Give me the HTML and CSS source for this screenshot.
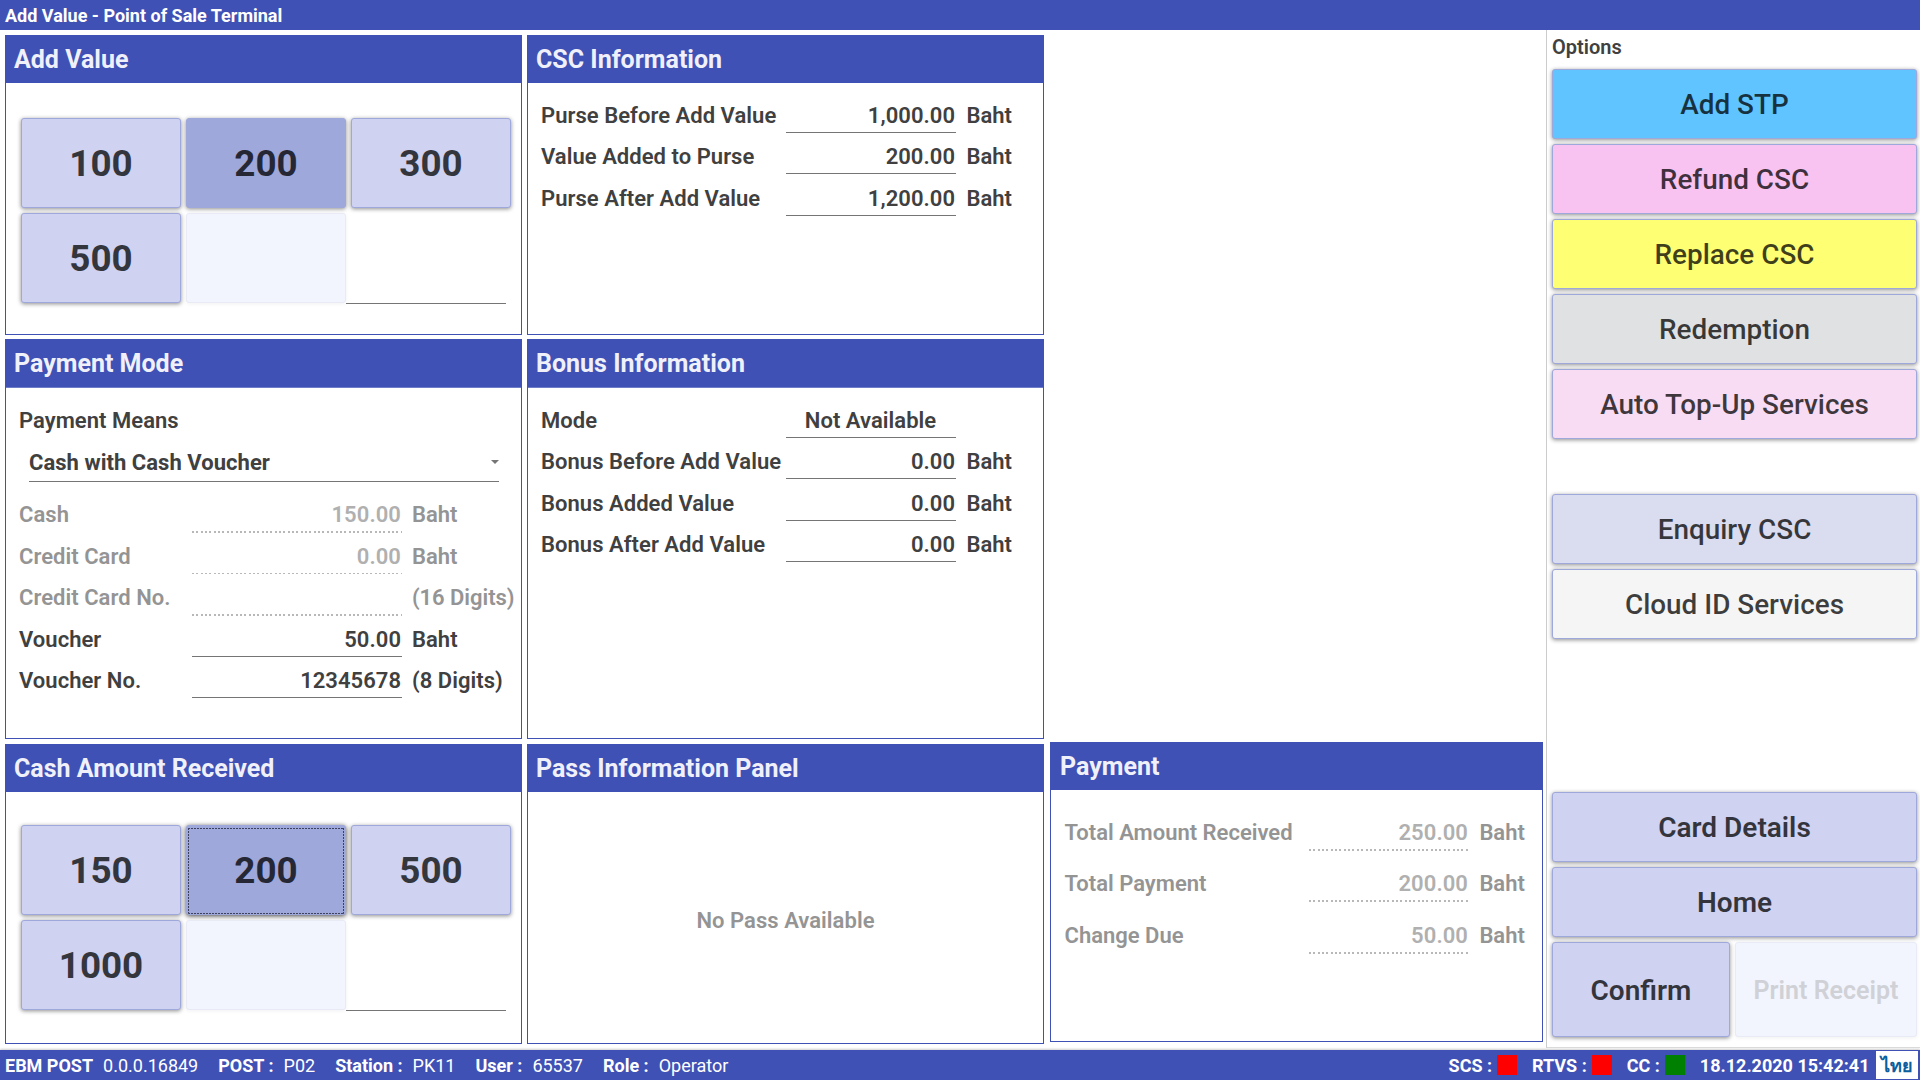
FILE: index.html
```html
<!DOCTYPE html>
<html lang="en">
<head>
<meta charset="utf-8">
<title>Add Value - Point of Sale Terminal</title>
<link rel="stylesheet" href="styles.css">
</head>
<body>
<header class="titlebar">Add Value - Point of Sale Terminal</header>

<main class="workspace">
  <div class="column">
    <section class="panel panel-top">
      <h2 class="panel-title">Add Value</h2>
      <div class="keypad">
        <button class="key">100</button>
        <button class="key selected">200</button>
        <button class="key">300</button>
        <button class="key">500</button>
        <button class="key blank" disabled></button>
        <div class="key-input"></div>
      </div>
    </section>

    <section class="panel panel-middle">
      <h2 class="panel-title">Payment Mode</h2>
      <div class="form form-mode">
        <div class="row"><span class="label">Payment Means</span></div>
        <div class="select"><span>Cash with Cash Voucher</span><svg class="caret" viewBox="0 0 8 4"><path d="M0 0h8L4 4z"/></svg></div>
        <div class="row off"><span class="label">Cash</span><span class="field">150.00</span><span class="unit">Baht</span></div>
        <div class="row off thin"><span class="label">Credit Card</span><span class="field">0.00</span><span class="unit">Baht</span></div>
        <div class="row off"><span class="label">Credit Card No.</span><span class="field"></span><span class="unit">(16 Digits)</span></div>
        <div class="row"><span class="label">Voucher</span><span class="field">50.00</span><span class="unit">Baht</span></div>
        <div class="row"><span class="label">Voucher No.</span><span class="field">12345678</span><span class="unit">(8 Digits)</span></div>
      </div>
    </section>

    <section class="panel panel-bottom">
      <h2 class="panel-title">Cash Amount Received</h2>
      <div class="keypad">
        <button class="key">150</button>
        <button class="key selected focused">200</button>
        <button class="key">500</button>
        <button class="key">1000</button>
        <button class="key blank" disabled></button>
        <div class="key-input"></div>
      </div>
    </section>
  </div>

  <div class="column">
    <section class="panel panel-top">
      <h2 class="panel-title">CSC Information</h2>
      <div class="form form-info">
        <div class="row"><span class="label">Purse Before Add Value</span><span class="field">1,000.00</span><span class="unit">Baht</span></div>
        <div class="row"><span class="label">Value Added to Purse</span><span class="field">200.00</span><span class="unit">Baht</span></div>
        <div class="row"><span class="label">Purse After Add Value</span><span class="field">1,200.00</span><span class="unit">Baht</span></div>
      </div>
    </section>

    <section class="panel panel-middle">
      <h2 class="panel-title">Bonus Information</h2>
      <div class="form form-info">
        <div class="row"><span class="label">Mode</span><span class="field centered">Not Available</span></div>
        <div class="row"><span class="label">Bonus Before Add Value</span><span class="field">0.00</span><span class="unit">Baht</span></div>
        <div class="row"><span class="label">Bonus Added Value</span><span class="field">0.00</span><span class="unit">Baht</span></div>
        <div class="row"><span class="label">Bonus After Add Value</span><span class="field">0.00</span><span class="unit">Baht</span></div>
      </div>
    </section>

    <section class="panel panel-bottom">
      <h2 class="panel-title">Pass Information Panel</h2>
      <div class="empty">No Pass Available</div>
    </section>
  </div>

  <div class="column column-payment">
    <section class="panel panel-payment">
      <h2 class="panel-title">Payment</h2>
      <div class="form form-payment">
        <div class="row off"><span class="label">Total Amount Received</span><span class="field">250.00</span><span class="unit">Baht</span></div>
        <div class="row off"><span class="label">Total Payment</span><span class="field">200.00</span><span class="unit">Baht</span></div>
        <div class="row off"><span class="label">Change Due</span><span class="field">50.00</span><span class="unit">Baht</span></div>
      </div>
    </section>
  </div>

  <aside class="options">
    <h3 class="options-title">Options</h3>
    <nav class="group">
      <button class="option add-stp">Add STP</button>
      <button class="option refund">Refund CSC</button>
      <button class="option replace">Replace CSC</button>
      <button class="option redemption">Redemption</button>
      <button class="option top-up">Auto Top-Up Services</button>
    </nav>
    <nav class="group group-lookup">
      <button class="option enquiry">Enquiry CSC</button>
      <button class="option cloud">Cloud ID Services</button>
    </nav>
    <nav class="group group-actions">
      <button class="option strong">Card Details</button>
      <button class="option strong">Home</button>
      <div class="pair">
        <button class="option strong tall">Confirm</button>
        <button class="option strong tall disabled" disabled>Print Receipt</button>
      </div>
    </nav>
  </aside>
</main>

<footer class="statusbar">
  <div class="facts">
    <span class="fact"><b>EBM POST</b> 0.0.0.16849</span>
    <span class="fact"><b>POST :</b> P02</span>
    <span class="fact"><b>Station :</b> PK11</span>
    <span class="fact"><b>User :</b> 65537</span>
    <span class="fact"><b>Role :</b> Operator</span>
  </div>
  <div class="signals">
    <span class="signal">SCS :<i class="lamp red"></i></span>
    <span class="signal">RTVS :<i class="lamp red"></i></span>
    <span class="signal">CC :<i class="lamp green"></i></span>
    <time class="clock">18.12.2020 15:42:41</time>
    <span class="lang" lang="th">ไทย</span>
  </div>
</footer>
</body>
</html>
```
FILE: styles.css
```css
:root {
  --indigo: #3f51b5;
  --indigo-light: #9fa8da;
  --key: #cfd2f1;
  --ink: #404040;
}

* { box-sizing: border-box; }

body {
  margin: 0;
  width: 1920px;
  height: 1080px;
  display: flex;
  flex-direction: column;
  overflow: hidden;
  background: #fff;
  color: var(--ink);
  font-family: Roboto, sans-serif;
}

button { font-family: inherit; padding: 0; margin: 0; }

.titlebar {
  height: 30px;
  padding: 1px 0 0 5px;
  background: var(--indigo);
  color: #fff;
  font-size: 18px;
  font-weight: 700;
  line-height: 30px;
}

.workspace {
  height: 1020px;
  display: grid;
  grid-template-columns: 522px 522px 502px 374px;
}

/* Panels */
.column {
  display: flex;
  flex-direction: column;
  padding: 5px 0 0 5px;
}

.column-payment {
  justify-content: flex-end;
  padding: 0 3px 8px 6px;
}

.panel { border: 1px solid var(--indigo); }
.panel-top { height: 300px; margin-bottom: 4px; }
.panel-middle { height: 400px; margin-bottom: 5px; }
.panel-bottom, .panel-payment { height: 300px; }

.panel-title {
  margin: 0;
  height: 47px;
  padding-left: 8px;
  background: var(--indigo);
  color: #f0f0fa;
  font-size: 25px;
  font-weight: 700;
  line-height: 48px;
}

.panel-middle .panel-title { height: 48px; border-bottom: 1px solid #6f7cc8; }
.panel-payment .panel-title { padding-left: 9px; }

/* Keypads */
.keypad {
  display: grid;
  grid-template-columns: repeat(3, 160px);
  grid-auto-rows: 90px;
  gap: 5px;
  padding: 35px 0 0 15px;
}

.panel-bottom .keypad { padding-top: 33px; }

.key {
  border: 1px solid var(--indigo-light);
  border-radius: 3px;
  background: var(--key);
  box-shadow: 0 1px 4px rgba(0, 0, 0, .45);
  color: #33363c;
  font-size: 36.8px;
  font-weight: 700;
}

.key.selected { background-color: var(--indigo-light); color: #262735; }

.key.focused {
  box-shadow: 0 1px 5px rgba(0, 0, 0, .75);
  background-image:
    repeating-linear-gradient(90deg, #3e415e 0 2px, transparent 2px 3px),
    repeating-linear-gradient(90deg, #3e415e 0 2px, transparent 2px 3px),
    repeating-linear-gradient(#3e415e 0 2px, transparent 2px 3px),
    repeating-linear-gradient(#3e415e 0 2px, transparent 2px 3px);
  background-size: 156px 1px, 156px 1px, 1px 86px, 1px 86px;
  background-position: 1px 2px, 1px 87px, 1px 2px, 156px 2px;
  background-repeat: no-repeat;
}

.key.blank { background: #f2f5fe; border-color: #e8eaf6; box-shadow: 0 1px 4px rgba(0, 0, 0, .06); }

.key-input { height: 91px; margin-left: -5px; width: 160px; border-bottom: 1px solid #757575; }

/* Forms */
.form { font-size: 22px; font-weight: 600; line-height: 33px; letter-spacing: .04px; }

.row {
  display: grid;
  grid-template-columns: var(--label) var(--field) auto;
  align-content: end;
  height: 41.4px;
  white-space: nowrap;
}

.row > * { height: 34px; }
.field { padding-right: 1px; border-bottom: 1px solid #757575; text-align: right; }
.field.centered { text-align: center; }
.unit { padding-left: 10.4px; }

.form-info { --label: 245px; --field: 170px; padding: 8.6px 0 0 13px; }
.form-mode { --label: 173px; --field: 210px; padding: 8.6px 0 0 13px; }
.form-mode .unit { padding-left: 10px; }
.form-payment { --label: 244.5px; --field: 160px; padding: 9px 0 0 13.5px; letter-spacing: 0; }
.form-payment .row { height: 51.5px; }
.form-payment .row > * { height: 34.6px; }

.off { color: #949494; }
.off .field {
  border-bottom: 0;
  color: #b0b0b0;
  letter-spacing: .07px;
  background: repeating-linear-gradient(90deg, #b8b8b8 0 2px, transparent 2px 4.35px) left bottom / 100% 2px no-repeat;
}
.form-mode .off .field { height: 35px; margin-bottom: -1px; }
.form-mode .off .unit { letter-spacing: -.05px; }
.form-mode .off.thin .field { height: 34px; margin-bottom: 0; background-size: 100% 1px; }

.select {
  display: flex;
  justify-content: space-between;
  align-items: center;
  width: 470px;
  height: 44px;
  margin: 0 0 9px 10px;
  padding-top: 7px;
  border-bottom: 1px solid #757575;
  font-weight: 700;
}

.caret { width: 8px; height: 4px; margin-bottom: 2px; fill: #757575; }

.empty {
  display: flex;
  align-items: center;
  justify-content: center;
  height: 257px;
  color: #949494;
  font-size: 22px;
  font-weight: 600;
  letter-spacing: .04px;
}

/* Options sidebar */
.options {
  display: flex;
  flex-direction: column;
  height: 1018px;
  padding: 0 3px 10px 5px;
  border-left: 1px solid #ccc;
  border-bottom: 1px solid #ddd;
}

.options-title {
  margin: 0;
  height: 39px;
  font-size: 20px;
  font-weight: 600;
  line-height: 34px;
}

.group { display: flex; flex-direction: column; gap: 5px; }
.group-lookup { margin-top: 55px; }
.group-actions { margin-top: auto; }
.pair { display: grid; grid-template-columns: 178px 182px; gap: 5px; }

.option {
  height: 70px;
  border: 1px solid var(--indigo-light);
  border-radius: 3px;
  box-shadow: 0 1px 4px rgba(0, 0, 0, .45);
  color: rgba(0, 0, 0, .75);
  font-size: 27.9px;
  font-weight: 500;
}

.add-stp { background: #5fc4ff; }
.refund { background: #f8c2f1; }
.replace { background: #ffff73; }
.redemption { background: #e0e1e3; }
.top-up { background: #f8dcf3; }
.enquiry { background: #dadcef; }
.cloud { background: #f5f5f5; }
.strong { background: var(--key); font-size: 28px; font-weight: 600; }
.tall { height: 95px; padding-top: 2px; }

.option.disabled {
  border-color: #e8eaf6;
  background: #f2f5fe;
  box-shadow: 0 1px 4px rgba(0, 0, 0, .06);
  color: #d0d1d6;
  font-size: 25px;
}

/* Status bar */
.statusbar {
  display: flex;
  justify-content: space-between;
  height: 30px;
  padding: 0 2px 0 5px;
  background: var(--indigo);
  box-shadow: 0 -1px 2px rgba(0, 0, 0, .2);
  color: #fff;
  font-size: 18px;
  line-height: 31px;
}

.facts, .signals { display: flex; }
.fact { margin-right: 20px; }
.fact b { margin-right: 5.5px; }
.signals { font-weight: 700; }
.signal { display: flex; margin-right: 15px; }
.lamp { width: 20px; height: 20px; margin: 5px 0 0 5px; }
.red { background: #f00; }
.green { background: #008000; }
.clock { margin-right: 6.5px; }

.lang {
  width: 42px;
  height: 28px;
  margin-top: 1px;
  background: #fff;
  color: #0b5f9e;
  line-height: 30px;
  text-align: center;
}
```
